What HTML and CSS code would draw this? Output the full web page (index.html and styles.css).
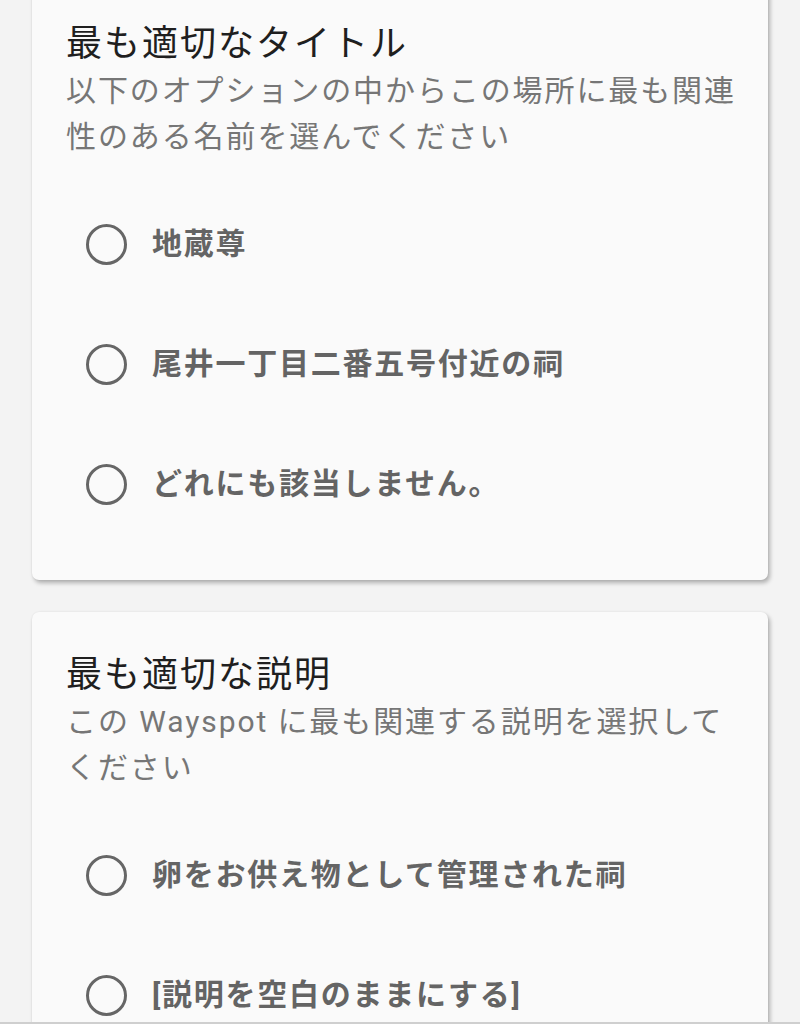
FILE: index.html
```html
<!DOCTYPE html>
<html lang="ja">
<head>
<meta charset="utf-8">
<link rel="stylesheet" href="styles.css">
</head>
<body>
<main class="page">
  <section class="card">
    <h2 class="card-title">最も適切なタイトル</h2>
    <p class="card-sub">以下のオプションの中からこの場所に最も関連性のある名前を選んでください</p>
    <ul class="options">
      <li class="option"><span class="radio"></span><span class="label">地蔵尊</span></li>
      <li class="option"><span class="radio"></span><span class="label">尾井一丁目二番五号付近の祠</span></li>
      <li class="option"><span class="radio"></span><span class="label">どれにも該当しません。</span></li>
    </ul>
  </section>
  <section class="card">
    <h2 class="card-title">最も適切な説明</h2>
    <p class="card-sub">この Wayspot に最も関連する説明を選択してください</p>
    <ul class="options">
      <li class="option"><span class="radio"></span><span class="label">卵をお供え物として管理された祠</span></li>
      <li class="option"><span class="radio"></span><span class="label">[説明を空白のままにする]</span></li>
    </ul>
  </section>
</main>
<div class="bottom-edge"></div>
</body>
</html>
```
FILE: styles.css
```css
html, body {
  margin: 0;
  padding: 0;
  background: #f3f3f3;
  font-family: Roboto, "Noto Sans CJK JP", sans-serif;
  overflow: hidden;
}

.page {
  display: flex;
  flex-direction: column;
  gap: 32px;
  padding: 0 32px;
  margin-top: -19px;
}

.card {
  background: #fafafa;
  border-radius: 7px;
  box-shadow: 2px 3px 4px rgba(0, 0, 0, 0.28), 0 0 2px rgba(0, 0, 0, 0.08);
  padding: 39px 28px 36px 34px;
}

.card-title {
  margin: 0;
  font-size: 36px;
  line-height: 48px;
  font-weight: 400;
  letter-spacing: 2px;
  color: #1f1f1f;
}

.card-sub {
  margin: 0;
  font-size: 30px;
  line-height: 45.5px;
  letter-spacing: 1.9px;
  color: #767676;
}

.options {
  list-style: none;
  margin: 25px 0 0 0;
  padding: 0;
}

.option {
  height: 120px;
  display: flex;
  align-items: center;
  padding-left: 20px;
}

.radio {
  box-sizing: border-box;
  width: 41px;
  height: 41px;
  border: 3.5px solid #666666;
  border-radius: 50%;
  flex: none;
}

.label {
  margin-left: 25px;
  font-size: 30px;
  line-height: 1;
  font-weight: 700;
  letter-spacing: 1.75px;
  color: #646464;
}

.bottom-edge {
  position: fixed;
  left: 0;
  right: 0;
  bottom: 0;
  height: 2px;
  background: #cfcfcf;
}
```
